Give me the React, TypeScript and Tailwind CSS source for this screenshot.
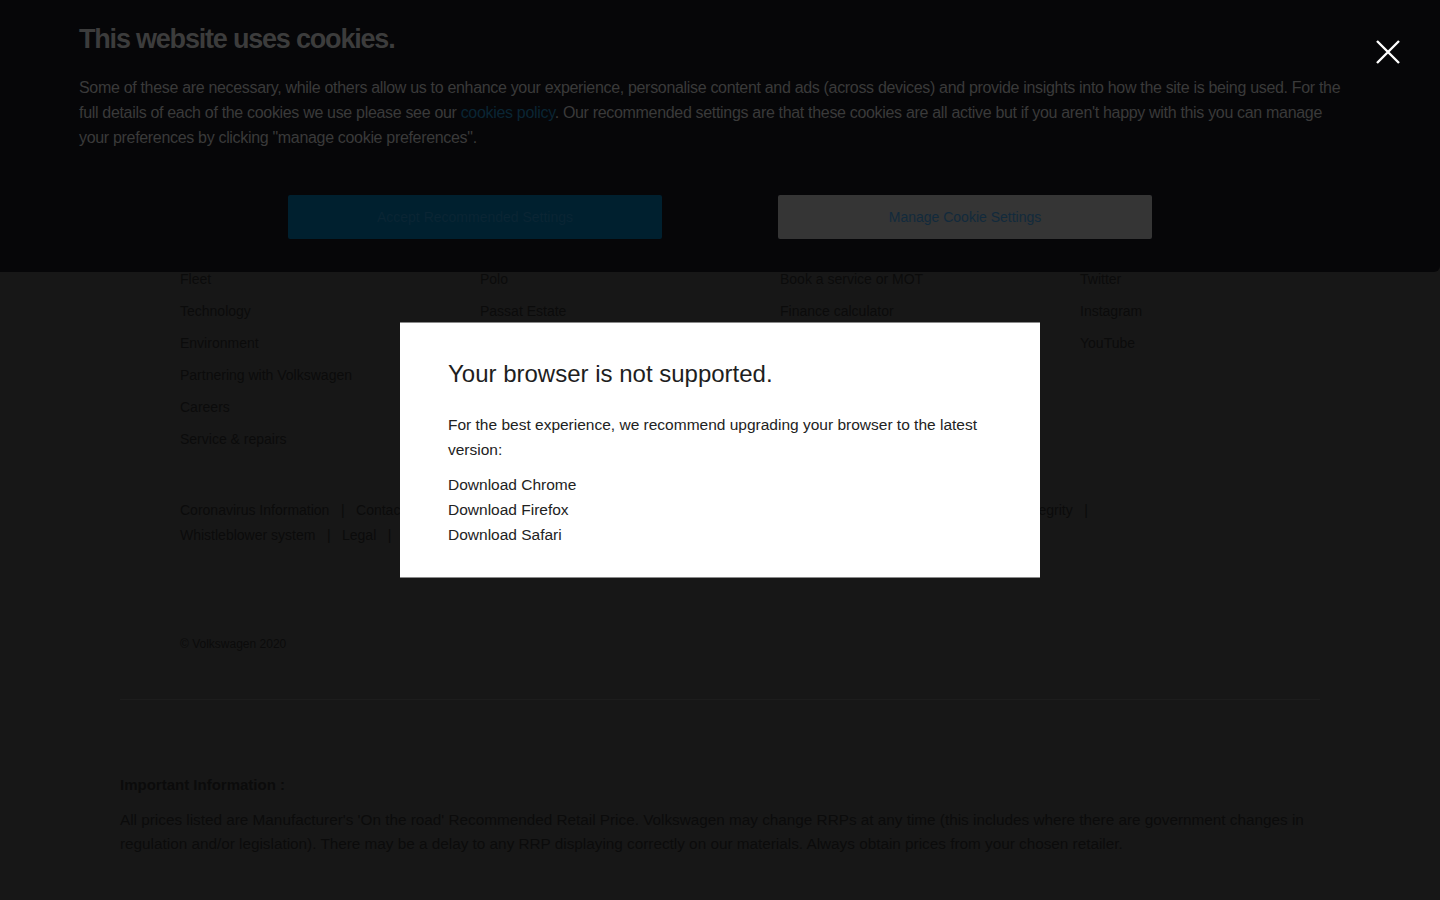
const columns = [
  {
    heading: "Volkswagen",
    links: ["About us", "News", "Brand", "Fleet", "Technology", "Environment", "Partnering with Volkswagen", "Careers", "Service & repairs"],
  },
  {
    heading: "Models",
    links: ["Golf", "T-Roc", "Tiguan", "Polo", "Passat Estate", "Touareg", "Arteon"],
  },
  {
    heading: "Owners",
    links: ["Retailer locator", "Brochures", "Test drive", "Book a service or MOT", "Finance calculator", "Warranty"],
  },
  {
    heading: "Follow us",
    links: ["Newsletter", "Blog", "Facebook", "Twitter", "Instagram", "YouTube"],
  },
];

const legalLinks = [
  "Coronavirus Information",
  "Contact centre",
  "Privacy & cookie policy",
  "Modern slavery act statement",
  "Accessibility",
  "Corporate Integrity",
  "Whistleblower system",
  "Legal",
  "Sitemap",
];

export default function App() {
  return (
    <div
      className="relative min-h-[900px] w-[1440px] overflow-hidden bg-[#171717]"
      style={{ fontFamily: '"Liberation Sans", Arial, sans-serif' }}
    >
      {/* page footer (dimmed behind the overlays) */}
      <footer className="px-[120px] pt-[103px] text-[#0b0b0b]">
        <div className="grid grid-cols-[repeat(4,300px)] pl-[60px]">
          {columns.map((col) => (
            <div key={col.heading}>
              <h4 className="flex h-16 items-center text-[15px] font-bold">{col.heading}</h4>
              <ul>
                {col.links.map((l) => (
                  <li key={l} className="flex h-8 items-center text-[14px]">
                    {l}
                  </li>
                ))}
              </ul>
            </div>
          ))}
        </div>

        <ul className="mt-[43px] flex w-[990px] flex-wrap pl-[60px] text-[14px] leading-[25px]">
          {legalLinks.map((l) => (
            <li key={l} className="flex">
              <span>{l}</span>
              <span className="px-[11.5px]">|</span>
            </li>
          ))}
        </ul>

        <p className="mt-[88px] px-[60px] text-[12px] leading-4">© Volkswagen 2020</p>

        <div className="mt-[47px] border-t border-[#1d1d1d]" />

        <div className="pt-[73px] pb-16">
          <h5 className="text-[15px] font-bold leading-6">Important Information :</h5>
          <p className="mt-[11px] text-[15.3px] leading-6">
            All prices listed are Manufacturer's 'On the road' Recommended Retail Price. Volkswagen may change RRPs at any
            time (this includes where there are government changes in regulation and/or legislation). There may be a delay
            to any RRP displaying correctly on our materials. Always obtain prices from your chosen retailer.
          </p>
        </div>
      </footer>

      {/* cookie banner */}
      <div className="fixed inset-x-0 top-0 h-[272px] rounded-br-md bg-[#060608] px-[79px] pt-[21px]">
        <h2 className="text-[27px] font-bold leading-9 tracking-[-1.2px] text-[#3c3c3c]">This website uses cookies.</h2>
        <p className="mt-[18px] w-[1270px] text-[16px] leading-[25px] tracking-[-0.32px] text-[#3a3a3a]">
          Some of these are necessary, while others allow us to enhance your experience, personalise content and ads
          (across devices) and provide insights into how the site is being used. For the full details of each of the
          cookies we use please see our <span className="text-[#0a2534]">cookies policy</span>. Our recommended settings
          are that these cookies are all active but if you aren't happy with this you can manage your preferences by
          clicking "manage cookie preferences".
        </p>
        <div className="mt-[45px] flex justify-center gap-[116px]">
          <button className="h-11 w-[374px] rounded-[2px] bg-[#00202f] text-[14px] text-[#0a2534]">
            Accept Recommended Settings
          </button>
          <button className="h-11 w-[374px] rounded-[2px] bg-[#353535] text-[14px] text-[#122a3c]">
            Manage Cookie Settings
          </button>
        </div>
        <button className="absolute top-10 right-10 h-6 w-6" aria-label="Close">
          <svg viewBox="0 0 24 24" className="h-6 w-6" fill="none" stroke="#ffffff" strokeWidth={2.4}>
            <path d="M1 1L23 23M23 1L1 23" />
          </svg>
        </button>
      </div>

      {/* unsupported browser modal */}
      <div className="fixed inset-0 flex items-center justify-center">
        <div className="w-[640px] border-y border-[#8a8a8a] bg-white px-12 pt-[35px] pb-[30px] text-[#222222]">
          <h3 className="text-[24px] leading-8 text-[#1e1e1e]">Your browser is not supported.</h3>
          <p className="mt-[22px] text-[15.5px] leading-[25px]">
            For the best experience, we recommend upgrading your browser to the latest version:
          </p>
          <ul className="mt-[10px] text-[15.5px] leading-[25px]">
            <li>Download Chrome</li>
            <li>Download Firefox</li>
            <li>Download Safari</li>
          </ul>
        </div>
      </div>
    </div>
  );
}
